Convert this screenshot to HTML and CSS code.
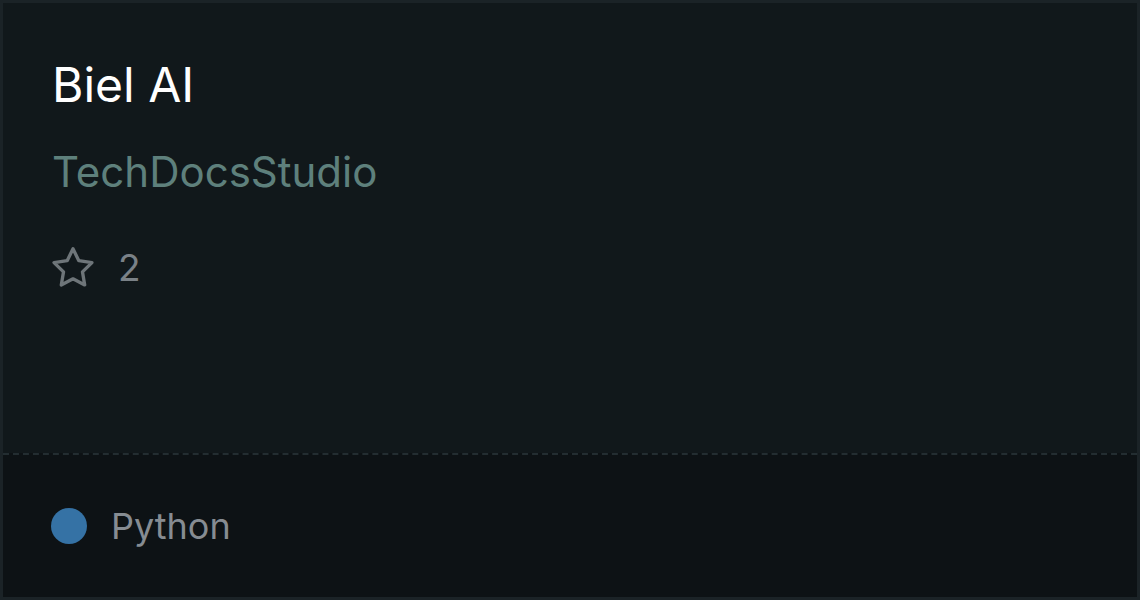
FILE: index.html
```html
<!DOCTYPE html>
<html lang="en">

<head>
  <meta charset="UTF-8">
  <meta name="viewport" content="width=device-width, initial-scale=1.0">
  <title>Biel AI</title>
  <link rel="stylesheet" href="styles.css">
</head>

<body>
  <div class="card">
    <!-- Repo info -->
    <div class="card-main">
      <h1 class="repo-name">Biel AI</h1>
      <p class="repo-owner">TechDocsStudio</p>
      <div class="stars">
        <svg class="star-icon" viewBox="0 0 24 24" width="50" height="50" fill="none" stroke="currentColor" stroke-width="1.6" stroke-linejoin="round">
          <path d="M12 2.8l2.8 5.7 6.3.9-4.55 4.45 1.07 6.27L12 17.2l-5.62 2.92 1.07-6.27L2.9 9.4l6.3-.9z" />
        </svg>
        <span class="star-count">2</span>
      </div>
    </div>

    <!-- Language footer -->
    <div class="card-footer">
      <span class="lang-dot"></span>
      <span class="lang-name">Python</span>
    </div>
  </div>
</body>

</html>
```

FILE: styles.css
```css
body {
  margin: 0;
  padding: 0;
  background-color: #1b2327;
  font-family: Inter, "Noto Sans", sans-serif;
}

.card {
  width: 1140px;
  height: 600px;
  box-sizing: border-box;
  border: 3px solid #1b2327;
  display: flex;
  flex-direction: column;
  background-color: #11181b;
}

.card-main {
  flex: 1;
  padding: 54px 49px 0;
}

.repo-name {
  margin: 0;
  font-size: 48px;
  font-weight: 400;
  line-height: 56px;
  color: #ffffff;
}

.repo-owner {
  margin: 34px 0 0;
  font-size: 42px;
  line-height: 50px;
  color: #5e807c;
}

.stars {
  display: flex;
  align-items: center;
  gap: 20px;
  margin-top: 46px;
  margin-left: -4px;
  color: #6e7579;
}

.star-icon {
  display: block;
}

.star-count {
  font-size: 37px;
  line-height: 40px;
  color: #7a8187;
}

.card-footer {
  height: 142px;
  border-top: 2px dashed #232d31;
  background-color: #0d1215;
  display: flex;
  align-items: center;
  padding: 0 48px;
  gap: 24px;
}

.lang-dot {
  width: 36px;
  height: 36px;
  border-radius: 50%;
  background-color: #3572a5;
}

.lang-name {
  font-size: 36px;
  color: #868c92;
}
```
